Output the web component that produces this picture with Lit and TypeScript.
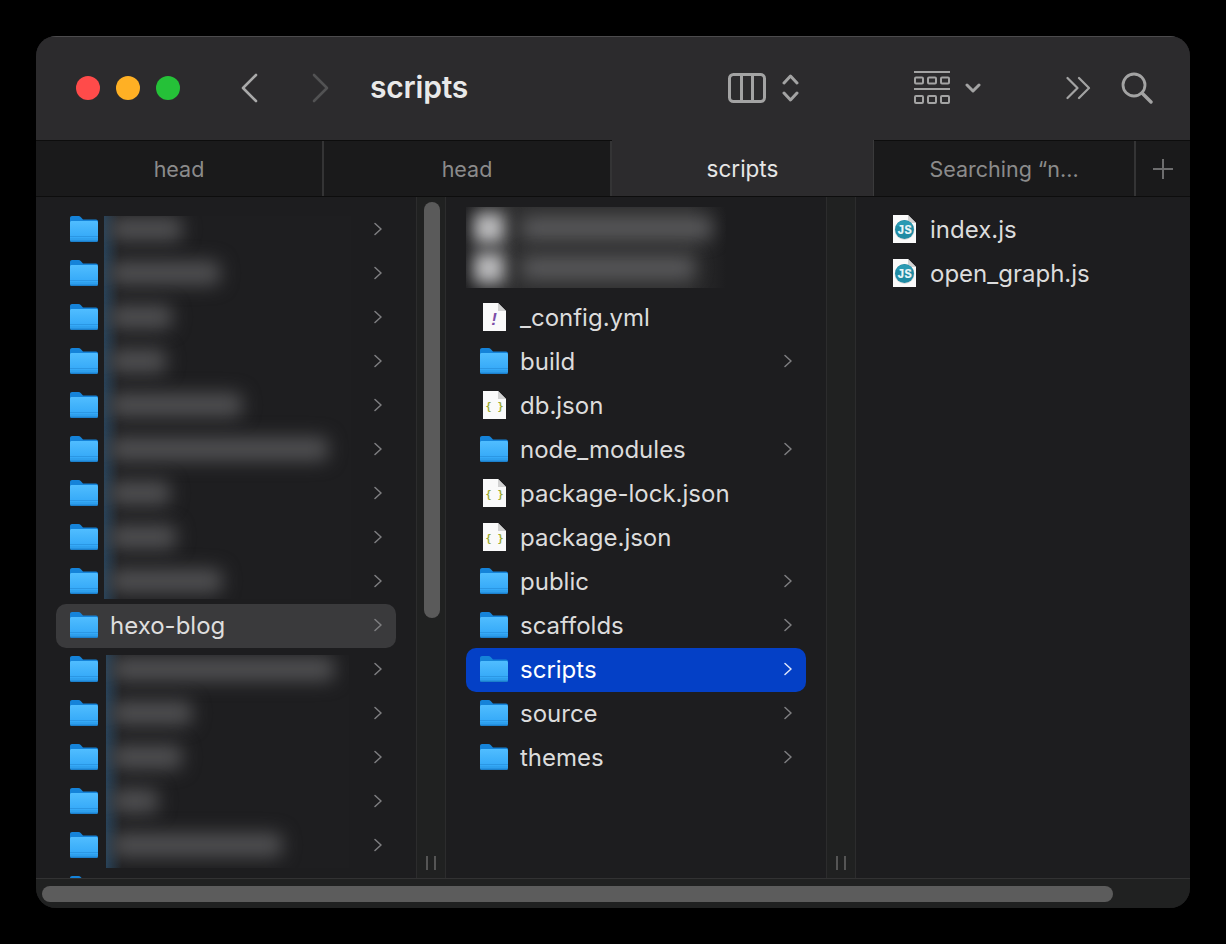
import { LitElement, html, css, svg } from "lit";
import { customElement } from "lit/decorators.js";

const folder = () => html`<svg class="ico" viewBox="0 0 28 26" width="28" height="26">
  <defs><linearGradient id="fg" x1="0" y1="0" x2="0" y2="1"><stop offset="0" stop-color="#50bdff"/><stop offset="1" stop-color="#2ea4f6"/></linearGradient></defs>
  <path d="M2 0h6.5c1 0 1.600.4 2.200 1l2.300 2.600h13c1.100 0 2 .9 2 2V10H0V2C0 .9.900 0 2 0z" fill="#1583d9"/>
  <path d="M1.500 5H26.500C27.300 5 28 5.700 28 6.500V24c0 1.100-.9 2-2 2H2c-1.100 0-2-.9-2-2V6.500C0 5.700.700 5 1.500 5z" fill="url(#fg)"/>
  <rect y="20" width="28" height="1" fill="#2b97e4"/><rect y="22.500" width="28" height="1" fill="#2b97e4"/>
  <path d="M0 24.500h28c0 .9-.9 1.500-2 1.500H2c-1.100 0-2-.6-2-1.500z" fill="#1c80cc"/>
</svg>`;

const docBase = svg`<path d="M0 0h15l8 8v20H0z" fill="#fafafa"/><path d="M15 0l8 8h-8z" fill="#d2d2d2"/>`;
const doc = (inner: unknown) => html`<svg class="ico doc" viewBox="0 0 23 28" width="23" height="28">${docBase}${inner}</svg>`;
const yml = () => doc(svg`<text class="bang" x="11" y="22" text-anchor="middle">!</text>`);
const json = () => doc(svg`<text class="brace" x="11.500" y="19" text-anchor="middle">{ }</text>`);
const js = () => doc(svg`<circle cx="11.500" cy="15" r="10" fill="#dcdcdc"/><circle cx="11.500" cy="14.500" r="9.500" fill="#1f8ba4"/><path d="M3 11a9.500 9.500 0 0 1 17 0z" fill="#2a9ab3"/><text class="js" x="11.500" y="18.500" text-anchor="middle">JS</text>`);

const chev = () => html`<svg class="chev" viewBox="0 0 8 14" width="8" height="14"><path d="M1 1.500L7 7l-6 5.500" fill="none" stroke="currentColor" stroke-width="1.500" stroke-linecap="round" stroke-linejoin="round"/></svg>`;

type Row = { name?: string; icon: () => unknown; more?: boolean; cls?: string };

const col1: Row[] = Array.from({ length: 16 }, (_, i) => ({
  name: i === 9 ? "hexo-blog" : undefined,
  icon: folder,
  more: i < 15,
  cls: i === 9 ? "sel-grey" : "",
}));

const col2: Row[] = [
  { icon: () => null },
  { icon: () => null },
  { name: "_config.yml", icon: yml },
  { name: "build", icon: folder, more: true },
  { name: "db.json", icon: json },
  { name: "node_modules", icon: folder, more: true },
  { name: "package-lock.json", icon: json },
  { name: "package.json", icon: json },
  { name: "public", icon: folder, more: true },
  { name: "scaffolds", icon: folder, more: true },
  { name: "scripts", icon: folder, more: true, cls: "sel-blue" },
  { name: "source", icon: folder, more: true },
  { name: "themes", icon: folder, more: true },
];

const col3: Row[] = [
  { name: "index.js", icon: js },
  { name: "open_graph.js", icon: js },
];

const blotsA = [72, 110, 62, 56, 132, 218, 60, 66, 112];
const blotsB = [222, 80, 70, 46, 170];

@customElement("app-root")
export class AppRoot extends LitElement {
  static styles = css`
    :host { display: block; width: 1226px; height: 944px; background: #000; padding: 36px; box-sizing: border-box; font-family: Inter, "Liberation Sans", sans-serif; }
    .win { width: 1154px; height: 872px; border-radius: 20px; overflow: hidden; display: flex; flex-direction: column; background: #1d1d1f; }

    .title { height: 104px; flex: none; box-sizing: border-box; background: #2c2b2d; border-top: 1px solid #4c4b4d; padding-bottom: 2px; display: flex; align-items: center; }
    .lights { display: flex; gap: 16px; margin-left: 40px; margin-top: 1px; }
    .lights i { width: 24px; height: 24px; border-radius: 50%; display: block; }
    .nav { display: block; flex: none; }
    .back { margin-left: 60px; }
    .fwd { margin-left: 54px; }
    h1 { margin: -2px 0 0 40px; font-size: 30px; font-weight: 600; color: #e9e9e9; letter-spacing: -0.2px; width: 358px; flex: none; }
    .tool { display: block; flex: none; }
    .t-ud { margin-left: 16px; }
    .t-grid { margin-left: 115px; }
    .t-dd { margin-left: 15px; }
    .t-more { margin-left: 85px; }
    .t-search { margin-left: 30px; }

    .tabs { height: 57px; flex: none; box-sizing: border-box; display: flex; background: #1a1a1b; border-top: 1px solid #0d0d0d; border-bottom: 1px solid #0d0d0d; color: #8b8b8b; font-size: 21.5px; }
    .tab { display: flex; align-items: center; justify-content: center; box-sizing: border-box; border-right: 2px solid #343435; }
    .tab.on { background: #2c2b2d; color: #e6e6e6; margin-top: -1px; border-right: 1px solid #3a3a3b; font-size: 22.5px; }
    .plus { flex: 1; display: flex; align-items: center; justify-content: center; }

    .body { flex: 1; min-height: 0; display: flex; }
    .col { position: relative; overflow: hidden; width: 380px; flex: none; box-sizing: border-box; padding-top: 11px; }
    .col.last { flex: 1; width: auto; }
    .gut { width: 30px; flex: none; box-sizing: border-box; background: #202121; border-left: 1px solid #2c2c2d; border-right: 1px solid #2c2c2d; position: relative; display: flex; flex-direction: column; justify-content: flex-end; align-items: center; padding-bottom: 8px; }
    .grip { width: 10px; height: 14px; box-sizing: border-box; border-left: 2px solid #555; border-right: 2px solid #555; }
    .thumb { position: absolute; left: 7px; top: 5px; width: 16px; height: 416px; border-radius: 8px; background: #5a5a5a; }

    .row { height: 44px; width: 340px; margin-left: 20px; box-sizing: border-box; padding: 0 14px 2px; border-radius: 10px; display: flex; align-items: center; color: #dcdcdc; font-size: 24px; }
    .slot { width: 28px; height: 28px; flex: none; display: flex; align-items: center; justify-content: center; margin-right: 12px; }
    .ico { display: block; flex: none; }
    .name { white-space: nowrap; }
    .chev { margin-left: auto; color: #7e7e80; flex: none; }
    .sel-grey { background: #3a3a3c; color: #dedede; }
    .sel-blue { background: #0440c6; color: #fff; }
    .sel-blue .chev { color: #dfe6fa; }

    .bang { font: italic 700 17px "Liberation Sans", sans-serif; fill: #7d4ea8; }
    .brace { font: 700 10px "DejaVu Sans Mono", monospace; fill: #9aa92f; }
    .js { font: 700 12px "Liberation Mono", monospace; fill: #eaf6f9; stroke: #eaf6f9; stroke-width: .2px; }

    .redact { position: absolute; overflow: hidden; background: #1e1e20; }
    .a { left: 68px; top: 19px; width: 247px; height: 383px; }
    .b { left: 70px; top: 458px; width: 243px; height: 213px; }
    .a::before, .b::before { content: ""; position: absolute; left: 0; top: 0; bottom: 0; width: 16px; background: linear-gradient(90deg, rgba(50,110,160,.45), rgba(50,110,160,0)); }
    .lines { display: flex; flex-direction: column; }
    .a .lines { margin-top: -9px; }
    .b .lines { margin-top: -8px; }
    .line { height: 44px; display: flex; align-items: center; padding-left: 6px; flex: none; }
    .blot { height: 24px; background: #505052; filter: blur(9px); border-radius: 6px; }
    .m { left: 20px; top: 10px; width: 260px; height: 81px; background: linear-gradient(90deg, #1e1e20 0, #2e2e2f 8%, #2e2e2f 85%, #1d1d1f 100%); }
    .m .line { padding-left: 8px; gap: 18px; height: 40px; }
    .m .dot { width: 30px; height: 30px; background: #bcbcbe; filter: blur(8px); flex: none; }
    .m .blot { background: #5a5a5c; height: 22px; }
    .m .lines { padding-top: 1px; }

    .hbar { height: 30px; flex: none; box-sizing: border-box; background: #202121; border-top: 1px solid #323233; padding: 7px 0 0 6px; }
    .hthumb { width: 1071px; height: 16px; border-radius: 8px; background: #5c5c5c; }
  `;

  private rows(list: Row[]) {
    return list.map(
      (r) => html`<div class="row ${r.cls ?? ""}">
        <div class="slot">${r.icon()}</div>
        ${r.name ? html`<span class="name">${r.name}</span>` : null}
        ${r.more ? chev() : null}
      </div>`
    );
  }

  private blots(widths: number[]) {
    return html`<div class="lines">${widths.map(
      (w) => html`<div class="line"><div class="blot" style="width:${w}px"></div></div>`
    )}</div>`;
  }

  render() {
    return html`<div class="win">
      <div class="title">
        <div class="lights"><i style="background:#ff4b4a"></i><i style="background:#ffb024"></i><i style="background:#25c138"></i></div>
        <svg class="nav back" width="18" height="30" viewBox="0 0 18 30"><path d="M16 2L3 15l13 13" fill="none" stroke="#a9a9a9" stroke-width="2.600" stroke-linecap="round" stroke-linejoin="round"/></svg>
        <svg class="nav fwd" width="18" height="30" viewBox="0 0 18 30"><path d="M2 2l13 13L2 28" fill="none" stroke="#525253" stroke-width="2.600" stroke-linecap="round" stroke-linejoin="round"/></svg>
        <h1>scripts</h1>
        <svg class="tool t-col" width="38" height="30" viewBox="0 0 38 30"><g fill="none" stroke="#a3a3a3" stroke-width="3"><rect x="1.500" y="1.500" width="35" height="27" rx="4"/><path d="M13.500 2v26M24.500 2v26"/></g></svg>
        <svg class="tool t-ud" width="17" height="28" viewBox="0 0 17 28"><path d="M2 9l6.500-7L15 9M2 19l6.500 7 6.500-7" fill="none" stroke="#a3a3a3" stroke-width="3" stroke-linecap="round" stroke-linejoin="round"/></svg>
        <svg class="tool t-grid" width="36" height="34" viewBox="0 0 36 34"><g fill="none" stroke="#a3a3a3"><path d="M0 1h36M0 18h36" stroke-width="2"/><g stroke-width="2"><rect x="1" y="6.500" width="8" height="6" rx="1"/><rect x="14" y="6.500" width="8" height="6" rx="1"/><rect x="27" y="6.500" width="8" height="6" rx="1"/><rect x="1" y="25" width="8" height="7" rx="1"/><rect x="14" y="25" width="8" height="7" rx="1"/><rect x="27" y="25" width="8" height="7" rx="1"/></g></g></svg>
        <svg class="tool t-dd" width="16" height="10" viewBox="0 0 16 10"><path d="M2 2l6 6 6-6" fill="none" stroke="#a3a3a3" stroke-width="3" stroke-linecap="round" stroke-linejoin="round"/></svg>
        <svg class="tool t-more" width="25" height="24" viewBox="0 0 25 24"><path d="M1.500 2l10 10-10 10M13 2l10 10-10 10" fill="none" stroke="#a3a3a3" stroke-width="2.200" stroke-linecap="round" stroke-linejoin="round"/></svg>
        <svg class="tool t-search" width="32" height="32" viewBox="0 0 32 32"><circle cx="13" cy="13" r="11" fill="none" stroke="#a3a3a3" stroke-width="2.800"/><path d="M21 21l9 9" stroke="#a3a3a3" stroke-width="3.400" stroke-linecap="round"/></svg>
      </div>
      <div class="tabs">
        <div class="tab" style="width:288px">head</div>
        <div class="tab" style="width:288px">head</div>
        <div class="tab on" style="width:262px">scripts</div>
        <div class="tab" style="width:262px">Searching “n...</div>
        <div class="plus"><svg width="20" height="20" viewBox="0 0 20 20"><path d="M10 0v20M0 10h20" stroke="#6d6d6e" stroke-width="2"/></svg></div>
      </div>
      <div class="body">
        <div class="col">
          ${this.rows(col1)}
          <div class="redact a">${this.blots(blotsA)}</div>
          <div class="redact b">${this.blots(blotsB)}</div>
        </div>
        <div class="gut"><div class="thumb"></div><div class="grip"></div></div>
        <div class="col">
          ${this.rows(col2)}
          <div class="redact m"><div class="lines">
            <div class="line"><div class="dot"></div><div class="blot" style="width:190px"></div></div>
            <div class="line"><div class="dot"></div><div class="blot" style="width:172px"></div></div>
          </div></div>
        </div>
        <div class="gut"><div class="grip"></div></div>
        <div class="col last">${this.rows(col3)}</div>
      </div>
      <div class="hbar"><div class="hthumb"></div></div>
    </div>`;
  }
}
